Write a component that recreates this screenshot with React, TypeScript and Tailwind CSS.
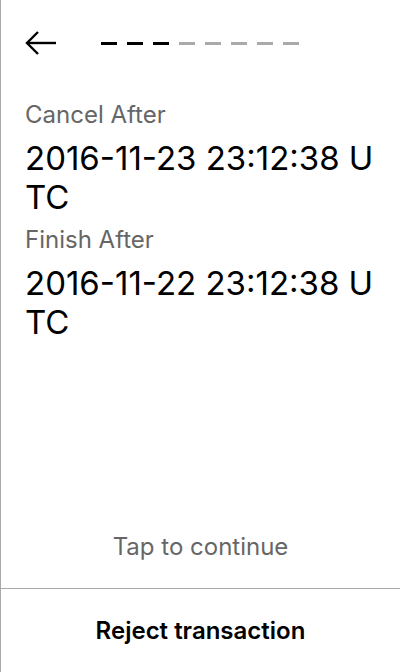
import React from "react";

const steps = [true, true, true, false, false, false, false, false];

function Field({ label, value }: { label: string; value: string }) {
  return (
    <div>
      <div className="text-[24px] leading-[32px] text-[#666666]">{label}</div>
      <div className="mt-[8px] text-[33px] leading-[39px] text-black break-all">{value}</div>
    </div>
  );
}

export default function App() {
  return (
    <div
      className="flex h-[672px] w-[400px] flex-col border-l border-[#aaaaaa] bg-white"
      style={{ fontFamily: "Inter, 'Noto Sans', sans-serif" }}
    >
      <div className="flex h-[86px] items-center pl-6">
        <svg width="32" height="24" viewBox="0 0 32 24" fill="none" stroke="black" strokeWidth="2.4">
          <path d="M31 12H2" />
          <path d="M13 1L2 12L13 23" />
        </svg>
        <div className="ml-[44px] flex gap-[10px]">
          {steps.map((done, i) => (
            <div key={i} className={done ? "h-[3px] w-4 bg-black" : "h-[3px] w-4 bg-[#aaaaaa]"} />
          ))}
        </div>
      </div>

      <div className="flex flex-col gap-[7px] pl-6 pr-[12px] pt-[13px]">
        <Field label="Cancel After" value="2016-11-23 23:12:38 UTC" />
        <Field label="Finish After" value="2016-11-22 23:12:38 UTC" />
      </div>

      <div className="flex-1" />

      <div className="pb-[25px] text-center text-[24px] leading-[32px] text-[#666666]">Tap to continue</div>
      <button className="h-[84px] w-full border-t border-[#aaaaaa] text-center text-[24px] font-semibold text-black">
        Reject transaction
      </button>
    </div>
  );
}
